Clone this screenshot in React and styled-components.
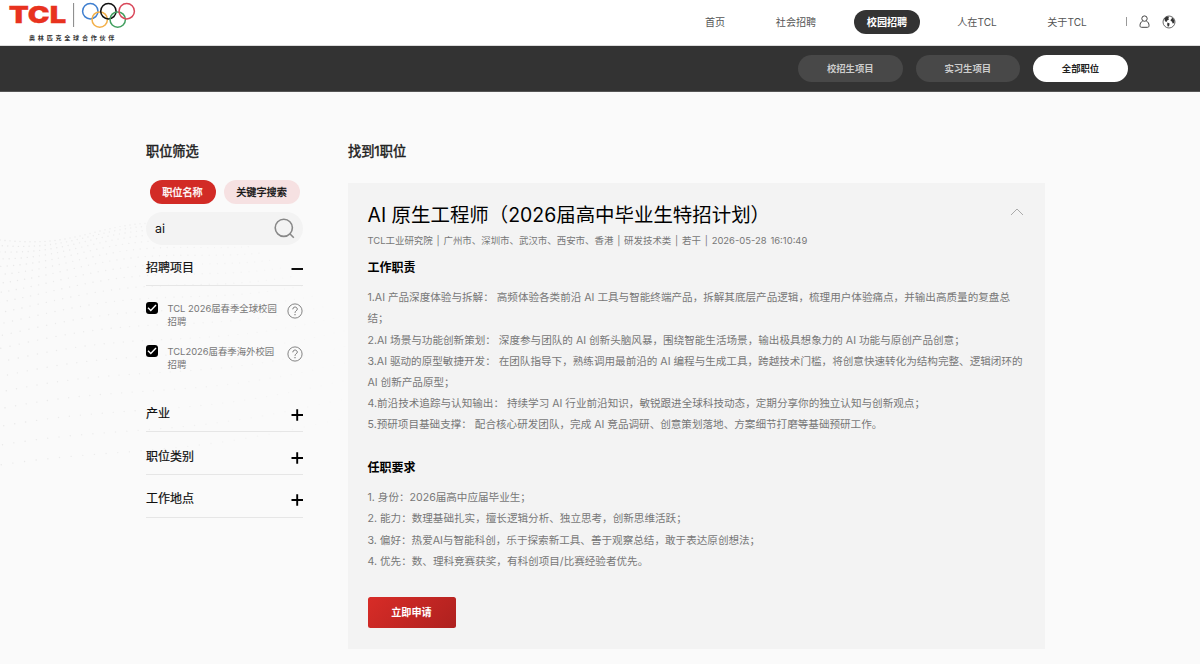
import React, { useState } from 'react';
import styled, { createGlobalStyle } from 'styled-components'

const GlobalStyle = createGlobalStyle`
    * {
        box-sizing: border-box;
    }
    body {
        margin: 0;
        background-color: #fafafa;
        font-family: Inter, "Noto Sans CJK SC", sans-serif;
        color: #222;
        overflow: hidden;
    }
    button {
        font-family: inherit;
        border: none;
        padding: 0;
        cursor: pointer;
    }
`;

const Page = styled.div`
    position: relative;
    height: 664px;
    overflow: hidden;
`;

const Backdrop = styled.svg`
    position: absolute;
    left: 0;
    top: 200px;
    z-index: -1;
`;

const Header = styled.header`
    height: 46px;
    display: flex;
    justify-content: space-between;
    background-color: white;
    border-bottom: 1px solid #ddd;
`;

const Nav = styled.nav`
    display: flex;
    align-items: center;
    height: 43px;
    padding-right: 24px;
`;

const NavItem = styled.a`
    display: flex;
    align-items: center;
    justify-content: center;
    height: 24px;
    width: ${props => props.$width}px;
    margin-right: ${props => props.$gap}px;
    border-radius: 12px;
    font-size: 10.1px;
    font-weight: ${props => props.$active ? 700 : 400};
    background-color: ${props => props.$active ? '#333' : 'transparent'};
    color: ${props => props.$active ? 'white' : '#555'};
`;

const NavDivider = styled.span`
    width: 1px;
    height: 9px;
    background-color: #999;
    margin-right: 12px;
`;

const GlobeIcon = styled.svg`
    margin-left: 12px;
`;

const SubBar = styled.div`
    height: 46px;
    display: flex;
    align-items: center;
    justify-content: flex-end;
    gap: 13px;
    padding-right: 72px;
    background-color: #333;
    border-bottom: 1px solid #555;
`;

const SubTab = styled.button`
    height: 27px;
    width: ${props => props.$active ? 95 : 104.5}px;
    padding-bottom: 1px;
    border-radius: 14px;
    font-size: 9.35px;
    font-weight: 700;
    background-color: ${props => props.$active ? 'white' : '#484848'};
    color: ${props => props.$active ? '#222' : '#ccc'};
`;

const Content = styled.div`
    display: flex;
    padding: 48px 0 0 146px;
`;

const Sidebar = styled.aside`
    width: 157px;
    margin-right: 45px;
`;

const Heading = styled.h2`
    margin: 0;
    height: 22px;
    line-height: 22px;
    font-size: 13.2px;
    font-weight: 400;
    color: #222;
    -webkit-text-stroke: 0.45px #222;
`;

const Modes = styled.div`
    display: flex;
    gap: 8px;
    padding: 18px 0 0 3.5px;
`;

const Mode = styled.button`
    height: 24px;
    width: ${props => props.$width}px;
    padding-bottom: 1px;
    border-radius: 12px;
    font-size: 10.15px;
    background-color: ${props => props.$active ? '#d22b26' : '#f6e1e2'};
    color: ${props => props.$active ? 'white' : '#111'};
    -webkit-text-stroke: 0.3px ${props => props.$active ? 'white' : '#111'};
`;

const SearchBox = styled.div`
    display: flex;
    align-items: center;
    justify-content: space-between;
    height: 33px;
    margin-top: 8px;
    padding: 0 8px 0 9px;
    border-radius: 17px;
    background-color: #f3f3f3;
`;

const SearchInput = styled.input`
    width: 100px;
    padding: 0;
    border: none;
    outline: none;
    background: transparent;
    font-family: inherit;
    font-size: 12.5px;
    color: #111;
`;

const GroupHead = styled.div`
    display: flex;
    align-items: center;
    justify-content: space-between;
    height: ${props => props.$first ? 41 : 42.8}px;
    padding-top: ${props => props.$first ? 2 : 4}px;
    border-bottom: 1px solid #e6e6e6;
    font-size: 12px;
    color: #111;
    -webkit-text-stroke: 0.2px #111;
    svg {
        position: relative;
        top: ${props => props.$first ? 3 : 2.5}px;
    }
`;

const Options = styled.div`
    height: 103.4px;
    padding-top: 16px;
`;

const Option = styled.div`
    display: flex;
    height: 43px;
`;

const Check = styled.span`
    width: 12px;
    height: 12px;
    border-radius: 3px;
    background-color: black;
    svg {
        display: block;
    }
`;

const OptionLabel = styled.span`
    width: 112px;
    margin-left: 9.5px;
    font-size: 9.4px;
    line-height: 13.4px;
    color: #777;
`;

const Help = styled.svg`
    margin: 1px 0 0 7px;
`;

const Results = styled.main`
    width: 697px;
`;

const Card = styled.section`
    position: relative;
    height: 466px;
    margin-top: 20.5px;
    padding: 18px 20px 0 19.5px;
    background-color: #f3f3f3;
`;

const Collapse = styled.svg`
    position: absolute;
    right: 21px;
    top: 25px;
`;

const JobTitle = styled.h1`
    margin: 0;
    height: 28px;
    line-height: 28px;
    font-size: 19.45px;
    font-weight: 400;
    color: black;
    white-space: nowrap;
`;

const Meta = styled.div`
    height: 20px;
    margin-top: 2.5px;
    line-height: 20px;
    font-size: 9.45px;
    word-spacing: 1.15px;
    color: #777;
    white-space: pre;
`;

const SectionTitle = styled.h3`
    margin: ${props => props.$top}px 0 0;
    height: 20px;
    line-height: 20px;
    font-size: 12px;
    font-weight: 700;
    color: black;
`;

const Lines = styled.div`
    padding-top: 9.7px;
`;

const Line = styled.div`
    height: 21.17px;
    line-height: 21.17px;
    font-size: 10.58px;
    color: #777;
    white-space: pre;
`;

const Apply = styled.button`
    display: block;
    width: 88px;
    height: 31px;
    margin-top: 25px;
    padding-bottom: 1px;
    border-radius: 2.5px;
    font-size: 10.15px;
    font-weight: 700;
    color: white;
    background: linear-gradient(135deg, #d82c27, #ae211f);
`;

const duties = [
    '1.AI 产品深度体验与拆解： 高频体验各类前沿 AI 工具与智能终端产品，拆解其底层产品逻辑，梳理用户体验痛点，并输出高质量的复盘总',
    '结；',
    '2.AI 场景与功能创新策划： 深度参与团队的 AI 创新头脑风暴，围绕智能生活场景，输出极具想象力的 AI 功能与原创产品创意；',
    '3.AI 驱动的原型敏捷开发： 在团队指导下，熟练调用最前沿的 AI 编程与生成工具，跨越技术门槛，将创意快速转化为结构完整、逻辑闭环的',
    'AI 创新产品原型；',
    '4.前沿技术追踪与认知输出： 持续学习 AI 行业前沿知识，敏锐跟进全球科技动态，定期分享你的独立认知与创新观点；',
    '5.预研项目基础支撑： 配合核心研发团队，完成 AI 竞品调研、创意策划落地、方案细节打磨等基础预研工作。'
]

const requirements = [
    '1. 身份：2026届高中应届毕业生；',
    '2. 能力：数理基础扎实，擅长逻辑分析、独立思考，创新思维活跃；',
    '3. 偏好：热爱AI与智能科创，乐于探索新工具、善于观察总结，敢于表达原创想法；',
    '4. 优先：数、理科竞赛获奖，有科创项目/比赛经验者优先。'
]

// faint wave of dots behind the filters
const dots = []
for(let row = 0; row < 20; row++){
    for(let col = 0; col < 40; col++){
        const x = col * (5 + row * 0.35) - row * 3
        const y = 40 + row * row * 0.45 + row * 4 - col * (0.4 + row * 0.07) + Math.sin(col / 6 + row / 5) * 5
        if(x < 345) dots.push({ x, y, o: 0.6 * (1 - x / 380) })
    }
}

function Logo(){
    return (
        <svg width="140" height="45" viewBox="0 0 140 45">
            <text x="8.8" y="22.9" fontFamily="Inter" fontWeight="900" fontSize="23" fill="#e8321f" stroke="#e8321f" strokeWidth="0.3"
                textLength="57.4" lengthAdjust="spacingAndGlyphs">TCL</text>
            <path d="M73.6 3v24" stroke="#777" strokeWidth="0.9" />
            <g fill="none" strokeWidth="1.5">
                <circle cx="90.3" cy="11.2" r="7.7" stroke="#3f7fd0" />
                <circle cx="99.7" cy="19.6" r="7.7" stroke="#f3b04a" />
                <circle cx="108.4" cy="11.2" r="7.7" stroke="#111" />
                <circle cx="117.7" cy="19.6" r="7.7" stroke="#43a060" />
                <circle cx="126.7" cy="11.2" r="7.7" stroke="#d9485a" />
            </g>
            <text x="29" y="40.4" fontFamily="Noto Sans CJK SC" fontWeight="700" fontSize="6.1" letterSpacing="2.72" fill="#333">奥林匹克全球合作伙伴</text>
        </svg>
    )
}

function Toggle({ open }){
    return (
        <svg width="12" height="12" viewBox="0 0 12 12">
            <path d={open ? 'M0.5 6H12' : 'M0.5 6H12M6.2 0.2V11.8'} stroke="black" strokeWidth="1.9" />
        </svg>
    )
}

function CheckOption({ label, rest }){
    return (
        <Option>
            <Check>
                <svg width="12" height="12" viewBox="0 0 12 12">
                    <path d="M2 5.8L4.8 8.6L10 3" fill="none" stroke="white" strokeWidth="1.4" />
                </svg>
            </Check>
            <OptionLabel>{label}<br />{rest}</OptionLabel>
            <Help width="16" height="16" viewBox="0 0 16 16" fill="none" stroke="#777">
                <circle cx="8" cy="8" r="7.1" strokeWidth="0.9" />
                <path d="M5.8 6.3C5.8 3.3 10.3 3.3 10.3 6.2C10.3 7.7 8 7.8 8 9.8" strokeWidth="1" />
                <path d="M8 11v1.2" strokeWidth="1.1" />
            </Help>
        </Option>
    )
}

export default function App(){
    const [keyword, setKeyword] = useState('ai')

    return (
        <Page>
            <GlobalStyle />
            <Backdrop width="350" height="300">
                {dots.map((d, i) => <circle key={i} cx={d.x} cy={d.y} r="0.7" fill="#dcdcdc" opacity={d.o} />)}
            </Backdrop>
            <Header>
                <Logo />
                <Nav>
                    <NavItem $width={22} $gap={49}>首页</NavItem>
                    <NavItem $width={42} $gap={37}>社会招聘</NavItem>
                    <NavItem $width={66} $gap={36} $active>校园招聘</NavItem>
                    <NavItem $width={42} $gap={48}>人在TCL</NavItem>
                    <NavItem $width={42} $gap={38}>关于TCL</NavItem>
                    <NavDivider />
                    <svg width="11" height="13" viewBox="0 0 11 13" fill="none" stroke="#444" strokeWidth="1">
                        <circle cx="5.5" cy="3.6" r="2.7" />
                        <path d="M3.6 6.2C1.8 6.8 1 8.6 1 10.6C1 11.8 1.5 12.3 2.5 12.3H8.5C9.5 12.3 10 11.8 10 10.6C10 8.6 9.2 6.8 7.4 6.2" />
                    </svg>
                    <GlobeIcon width="14" height="14" viewBox="0 0 14 14">
                        <circle cx="7" cy="7" r="6" fill="none" stroke="#444" strokeWidth="0.8" />
                        <path d="M2.2 3.6L4.6 1.6L7 1.8L6.4 3.4L7 4.6L5.2 5.4L4.6 7L3 6.2Z" fill="#333" />
                        <path d="M5.4 7.6L7.6 8.4L7.2 10.4L6 12L5.2 10Z" fill="#333" />
                        <path d="M9 2.4L11 3.2L12.4 5.4L12.2 8L10.6 8.6L10 6.6L8.6 6L8.8 4.4L10 3.8Z" fill="#333" />
                    </GlobeIcon>
                </Nav>
            </Header>
            <SubBar>
                <SubTab>校招生项目</SubTab>
                <SubTab>实习生项目</SubTab>
                <SubTab $active>全部职位</SubTab>
            </SubBar>
            <Content>
                <Sidebar>
                    <Heading>职位筛选</Heading>
                    <Modes>
                        <Mode $width={66} $active>职位名称</Mode>
                        <Mode $width={76}>关键字搜索</Mode>
                    </Modes>
                    <SearchBox>
                        <SearchInput value={keyword} onChange={e => setKeyword(e.target.value)} />
                        <svg width="21" height="21" viewBox="0 0 21 21" fill="none" stroke="#888" strokeWidth="1.6">
                            <circle cx="9.8" cy="9.8" r="8.6" />
                            <path d="M15.8 15.8L19.8 19.8" />
                        </svg>
                    </SearchBox>
                    <GroupHead $first>招聘项目<Toggle open /></GroupHead>
                    <Options>
                        <CheckOption label="TCL 2026届春季全球校园" rest="招聘" />
                        <CheckOption label="TCL2026届春季海外校园" rest="招聘" />
                    </Options>
                    <GroupHead>产业<Toggle /></GroupHead>
                    <GroupHead>职位类别<Toggle /></GroupHead>
                    <GroupHead>工作地点<Toggle /></GroupHead>
                </Sidebar>
                <Results>
                    <Heading>找到1职位</Heading>
                    <Card>
                        <Collapse width="14" height="8" viewBox="0 0 14 8" fill="none" stroke="#aaa">
                            <path d="M1 7L7 1L13 7" />
                        </Collapse>
                        <JobTitle>AI 原生工程师（2026届高中毕业生特招计划）</JobTitle>
                        <Meta>TCL工业研究院 | 广州市、深圳市、武汉市、西安市、香港 | 研发技术类 | 若干 | 2026-05-28 16:10:49</Meta>
                        <SectionTitle $top={6.5}>工作职责</SectionTitle>
                        <Lines>
                            {duties.map(text => <Line key={text}>{text}</Line>)}
                        </Lines>
                        <SectionTitle $top={22.3}>任职要求</SectionTitle>
                        <Lines>
                            {requirements.map(text => <Line key={text}>{text}</Line>)}
                        </Lines>
                        <Apply>立即申请</Apply>
                    </Card>
                </Results>
            </Content>
        </Page>
    )
}
